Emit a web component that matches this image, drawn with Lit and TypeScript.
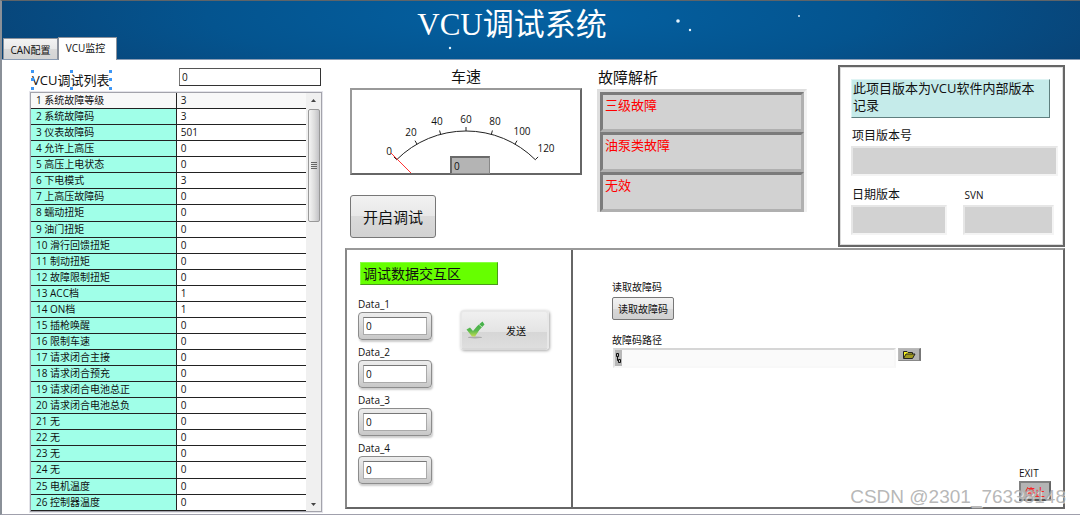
import { LitElement, html, svg, css } from "lit";
import { customElement } from "lit/decorators.js";

const SIGNALS: [string, string][] = [
  ["系统故障等级", "3"],
  ["系统故障码", "3"],
  ["仪表故障码", "501"],
  ["允许上高压", "0"],
  ["高压上电状态", "0"],
  ["下电模式", "3"],
  ["上高压故障码", "0"],
  ["蠕动扭矩", "0"],
  ["油门扭矩", "0"],
  ["滑行回馈扭矩", "0"],
  ["制动扭矩", "0"],
  ["故障限制扭矩", "0"],
  ["ACC档", "1"],
  ["ON档", "1"],
  ["插枪唤醒", "0"],
  ["限制车速", "0"],
  ["请求闭合主接", "0"],
  ["请求闭合预充", "0"],
  ["请求闭合电池总正", "0"],
  ["请求闭合电池总负", "0"],
  ["无", "0"],
  ["无", "0"],
  ["无", "0"],
  ["无", "0"],
  ["电机温度", "0"],
  ["控制器温度", "0"],
];

const FAULTS = ["三级故障", "油泵类故障", "无效"];

const base = css`
  * {
    box-sizing: border-box;
  }
  button,
  input {
    font: inherit;
    color: inherit;
    margin: 0;
    border-radius: 0;
  }
  input {
    min-width: 0;
    outline: none;
  }
  label {
    display: block;
  }
`;

@customElement("signal-list")
export class SignalList extends LitElement {
  static styles = [
    base,
    css`
      :host {
        display: flex;
        flex-direction: column;
      }
      .head {
        display: flex;
        align-items: flex-start;
        justify-content: space-between;
        padding: 3px 1px 3px 1px;
      }
      .title {
        position: relative;
        margin-top: 3px;
        font-size: 13px;
        line-height: 18px;
        padding: 0 1px;
      }
      .handle {
        position: absolute;
        width: 3px;
        height: 3px;
        background: #3c96f5;
      }
      .t { top: -1px; }
      .m { top: 7px; }
      .b { bottom: -1px; }
      .l { left: 0; }
      .c { left: calc(50% - 1px); }
      .r { right: -2px; }
      .index {
        width: 49%;
        height: 18px;
        border: 1px solid #333;
        border-left-color: #777;
        border-top-color: #555;
        background: #fff;
        padding: 0 2px;
      }
      .frame {
        flex: 1;
        display: grid;
        grid-template-columns: 1fr 15px;
        border: 1px solid #a3a3ab;
        outline: 1px solid #e4e4ea;
      }
      table {
        width: 100%;
        height: 100%;
        border-collapse: separate;
        border-spacing: 0;
        table-layout: fixed;
      }
      td,
      th {
        height: 16px;
        padding: 0 4px;
        font-weight: 400;
        text-align: left;
        line-height: 15px;
        white-space: nowrap;
        border-bottom: 1px solid #222;
      }
      th {
        width: 53%;
        padding-left: 5px;
        background: #a0ffe8;
        border-right: 1px solid #222;
      }
      tr:first-child > * {
        background: #f8f8f8;
      }
      .bar {
        display: flex;
        flex-direction: column;
        align-items: center;
        background: #f0f0f0;
      }
      .arrow {
        display: block;
        width: 13px;
        height: 16px;
      }
      .thumb {
        display: grid;
        place-items: center;
        width: 12px;
        height: 27%;
        margin-bottom: auto;
        border: 1px solid #999;
        border-radius: 2px;
        background: linear-gradient(90deg, #f4f4f4, #dcdcdc 55%, #c2c2c6);
      }
    `,
  ];

  render() {
    return html`
      <div class="head">
        <label class="title" for="index">
          VCU调试列表
          ${["t l", "t c", "t r", "m l", "m r", "b l", "b c", "b r"].map(
            (p) => html`<span class="handle ${p}"></span>`
          )}
        </label>
        <input class="index" id="index" value="0" />
      </div>
      <div class="frame">
        <table>
          <tbody>
            ${SIGNALS.map(
              ([name, value], i) =>
                html`<tr><th scope="row">${i + 1} ${name}</th><td>${value}</td></tr>`
            )}
          </tbody>
        </table>
        <div class="bar">
          <svg class="arrow" viewBox="0 0 13 16"><path d="M4 9 L6.5 6 L9 9Z" fill="#444" /></svg>
          <div class="thumb">
            <svg width="6" height="7" viewBox="0 0 6 7">
              <path d="M0 .5H6M0 2.5H6M0 4.5H6M0 6.5H6" stroke="#666" />
            </svg>
          </div>
          <svg class="arrow" viewBox="0 0 13 16"><path d="M4 8 L6.5 11 L9 8Z" fill="#444" /></svg>
        </div>
      </div>
    `;
  }
}

@customElement("speed-gauge")
export class SpeedGauge extends LitElement {
  static styles = [
    base,
    css`
      :host {
        display: block;
      }
      .title {
        margin-bottom: 2px;
        text-align: center;
        font-size: 15px;
        line-height: 20px;
      }
      .dial {
        position: relative;
        border: 2px solid #666;
        border-top-color: #999;
        border-left-color: #999;
        background: #fff;
      }
      svg {
        display: block;
        width: 100%;
      }
      text {
        font-size: 10px;
        text-anchor: middle;
        fill: #111;
      }
      .value {
        position: absolute;
        left: 43%;
        bottom: -1px;
        width: 40px;
        height: 18px;
        padding: 0 2px;
        background: #b4b4b4;
        border: 1px solid #888;
        border-top: 2px solid #6a6a6a;
        border-left: 2px solid #6a6a6a;
      }
    `,
  ];

  render() {
    const cx = 114;
    const cy = 139;
    const r = 98;
    const at = (deg: number, radius: number): [number, number] => [
      cx + radius * Math.sin((deg * Math.PI) / 180),
      cy - radius * Math.cos((deg * Math.PI) / 180),
    ];
    const labels: [number, number][] = [
      [37, 65], [59, 46], [85, 35], [114, 33], [143, 35], [170, 45], [194, 62],
    ];
    return html`
      <label class="title" for="speed">车速</label>
      <div class="dial">
        <svg viewBox="0 0 228 83">
          <path d="M44.7 69.7 A98 98 0 0 1 183.3 69.7" fill="none" stroke="#222" />
          ${labels.map(([x, y], i) => {
            const [x1, y1] = at(-45 + i * 15, r);
            const [x2, y2] = at(-45 + i * 15, r + 4);
            return svg`
              <path d="M${x1} ${y1} L${x2} ${y2}" stroke="#222" />
              <text x=${x} y=${y}>${i * 20}</text>`;
          })}
          <path d="M39 63 L59 83" stroke="#f33" />
        </svg>
        <input class="value" id="speed" value="0" readonly />
      </div>
    `;
  }
}

@customElement("fault-view")
export class FaultView extends LitElement {
  static styles = [
    base,
    css`
      :host {
        display: block;
      }
      .title {
        margin-bottom: 2px;
        padding-left: 1px;
        font-size: 15px;
        line-height: 20px;
      }
      .box {
        border: 3px solid #dedede;
        border-right-color: #f2f2f2;
        border-bottom: 0;
      }
      .row {
        height: 40px;
        padding: 0 2px;
        font-size: 13px;
        line-height: 20px;
        color: #f00;
        background: #d2d2d2;
        border: 3px solid;
        border-color: #7b7b7b #b0b0b0 #b0b0b0 #7b7b7b;
      }
    `,
  ];

  render() {
    return html`
      <div class="title">故障解析</div>
      <div class="box">${FAULTS.map((f) => html`<div class="row">${f}</div>`)}</div>
    `;
  }
}

@customElement("version-panel")
export class VersionPanel extends LitElement {
  static styles = [
    base,
    css`
      :host {
        display: block;
        box-sizing: border-box;
        padding: 12px 5px 10px 11px;
        border: 2px solid #666;
        outline: 1px solid #ddd;
        outline-offset: -3px;
      }
      .note {
        margin-right: 8px;
        padding: 0 2px 3px 1px;
        font-size: 13px;
        line-height: 17px;
        background: #c5ebea;
        border: 1px solid #5f7f7f;
        border-top-color: #dff4f4;
        border-left-color: #dff4f4;
      }
      label {
        padding-left: 1px;
        font-size: 12px;
        line-height: 18px;
        height: 19px;
      }
      .small {
        font-size: 10px;
      }
      .wide {
        margin: 9px 0 10px;
      }
      .pair {
        display: grid;
        grid-template-columns: 97fr 91fr;
        gap: 16px;
        padding-right: 4px;
      }
      input {
        display: block;
        width: 100%;
        height: 30px;
        background: #d2d2d2;
        border: 2px solid;
        border-color: #e6e6e6 #f4f4f4 #f4f4f4 #e6e6e6;
      }
    `,
  ];

  render() {
    return html`
      <div class="note">此项目版本为VCU软件内部版本记录</div>
      <div class="wide">
        <label for="project">项目版本号</label>
        <input id="project" readonly />
      </div>
      <div class="pair">
        <div>
          <label for="date">日期版本</label>
          <input id="date" readonly />
        </div>
        <div>
          <label class="small" for="svn">SVN</label>
          <input id="svn" readonly />
        </div>
      </div>
    `;
  }
}

@customElement("exchange-panel")
export class ExchangePanel extends LitElement {
  static styles = [
    base,
    css`
      :host {
        display: block;
        padding: 12px 22px 0 11px;
      }
      .title {
        width: 138px;
        margin-left: 2px;
        padding: 0 2px;
        font-size: 14px;
        line-height: 21px;
        background: #6f0;
        border: 1px solid #4a9a1a;
        border-top-color: #8f4;
        border-left-color: #8f4;
      }
      .body {
        display: flex;
        justify-content: space-between;
        align-items: flex-start;
        padding-top: 11px;
      }
      .fields {
        display: grid;
        gap: 4px;
      }
      label {
        line-height: 16px;
      }
      .well {
        width: 74px;
        padding: 4px;
        border: 1px solid #8c8c8c;
        border-radius: 4px;
        background: linear-gradient(#ededed, #c8c8c8);
        box-shadow: 1px 2px 2px #ccc;
      }
      .well input {
        display: block;
        width: 100%;
        height: 18px;
        padding: 0 2px;
        background: #fff;
        border: 1px solid #aaa;
        border-top-color: #777;
      }
      .send {
        display: flex;
        align-items: center;
        width: 89px;
        height: 40px;
        margin-top: 14px;
        padding: 0 21px 0 4px;
        justify-content: space-between;
        border: 2px solid #e8e8e8;
        border-bottom-color: #d8d8d8;
        border-radius: 4px;
        background: linear-gradient(#f0f0f0, #e4e4e4 55%, #d6d6d6 56%, #dedede);
        box-shadow: 1px 1px 3px #aaa;
      }
    `,
  ];

  render() {
    return html`
      <div class="title">调试数据交互区</div>
      <div class="body">
        <div class="fields">
          ${[1, 2, 3, 4].map(
            (n) => html`<div>
              <label for="d${n}">Data_${n}</label>
              <div class="well"><input id="d${n}" value="0" /></div>
            </div>`
          )}
        </div>
        <button class="send">
          <svg width="19" height="18" viewBox="0 0 19 18">
            <defs>
              <linearGradient id="leaf" x1="0" y1="0" x2="0" y2="1">
                <stop offset="0" stop-color="#3fae49" />
                <stop offset=".6" stop-color="#58b84e" />
                <stop offset="1" stop-color="#c0dc50" />
              </linearGradient>
            </defs>
            <ellipse cx="9" cy="16.4" rx="7" ry="1" fill="#aaa" />
            <path d="M.5 8.500 L4 6.500 L7 10 Q11 4.500 16.500 .5 L18.500 3.500 Q12.500 9 9 15.500 L6 15.500 Z" fill="url(#leaf)" />
            <path d="M13 3.500 L16 6" stroke="#d9f0d0" stroke-width=".8" />
          </svg>
          <span>发送</span>
        </button>
      </div>
    `;
  }
}

@customElement("code-panel")
export class CodePanel extends LitElement {
  static styles = [
    base,
    css`
      :host {
        display: flex;
        flex-direction: column;
        padding: 29px 12px 6px 39px;
      }
      .lab {
        line-height: 16px;
      }
      .read {
        align-self: flex-start;
        width: 62px;
        height: 23px;
        margin: 2px 0 12px;
        padding: 0;
        border: 1px solid #777;
        border-radius: 2px;
        background: linear-gradient(#f2f2f2, #e6e6e6 50%, #d8d8d8 51%, #d0d0d0);
      }
      .path {
        display: flex;
        align-items: flex-start;
        gap: 2px;
        padding: 0 130px 0 1px;
      }
      .field {
        flex: 1;
        display: flex;
        height: 20px;
        border: 2px solid;
        border-color: #d6d6d6 #f6f6f6 #f8f8f8 #e2e2e2;
        background: #fafafa;
      }
      .field svg {
        flex: none;
        background: #b8b8b8;
      }
      .field input {
        flex: 1;
        border: 0;
        padding: 0 2px;
        background: none;
      }
      .browse {
        display: grid;
        place-items: center;
        width: 23px;
        height: 13px;
        padding: 0;
        border: 1px solid #bbb;
        border-right: 2px solid #777;
        border-bottom-color: #888;
        background: #b4b4b4;
      }
      .exit {
        align-self: flex-end;
        margin-top: auto;
      }
      .stop {
        display: block;
        width: 32px;
        height: 20px;
        padding: 0;
        color: #f00;
        background: #b4b4b4;
        border: 2px solid;
        border-color: #808080 #666 #555 #808080;
      }
    `,
  ];

  render() {
    return html`
      <label class="lab" for="read">读取故障码</label>
      <button class="read" id="read">读取故障码</button>
      <label class="lab" for="path">故障码路径</label>
      <div class="path">
        <div class="field">
          <svg width="7" height="16" viewBox="0 0 7 16">
            <path d="M1.500 3.500h2v3h-2zM2.500 7v3.500h1M3.500 9.500h2v3h-2z" fill="none" stroke="#111" />
          </svg>
          <input id="path" />
        </div>
        <button class="browse" aria-label="浏览">
          <svg width="14" height="9" viewBox="0 0 14 9">
            <path d="M1.500 8V1.500H5L6 2.500H10.500V4" fill="#f4ee20" stroke="#222" />
            <path d="M1.500 8.500L4 4H13L10.500 8.500Z" fill="#a09a20" stroke="#222" />
          </svg>
        </button>
      </div>
      <div class="exit">
        <label class="lab" for="stop">EXIT</label>
        <button class="stop" id="stop">停止</button>
      </div>
    `;
  }
}

@customElement("app-root")
export class AppRoot extends LitElement {
  static styles = [
    base,
    css`
      :host {
        display: flex;
        flex-direction: column;
        position: relative;
        box-sizing: border-box;
        min-height: 100vh;
        padding-bottom: 1px;
        font-family: "Open Sans", "Noto Sans CJK SC", sans-serif;
        font-size: 10px;
        color: #111;
        background: #fff;
      }
      header {
        position: relative;
        height: 60px;
        border-top: 1px solid #5f6468;
        border-left: 2px solid #8a9098;
        border-bottom: 1px solid #8a9cb4;
        background: radial-gradient(ellipse 62% 190% at 50% 25%, #0461a2, #04548f 50%, #0a3f70);
      }
      h1 {
        margin: 0;
        padding: 2px 58px 0 0;
        text-align: center;
        font: 400 31px/44px "Liberation Serif", "Noto Sans CJK SC", serif;
        color: #fff;
      }
      .stars {
        position: absolute;
        inset: 0;
        width: 100%;
        height: 100%;
      }
      nav {
        position: absolute;
        left: 1px;
        bottom: -1px;
        display: flex;
        align-items: flex-end;
      }
      .tab {
        height: 21px;
        width: 55px;
        padding: 0;
        margin-bottom: 1px;
        border: 1px solid #8c929c;
        border-bottom: 0;
        background: linear-gradient(#f3f3f3, #e9e9e9 50%, #dadada 51%, #d4d4d4);
      }
      .on {
        height: 23px;
        width: 59px;
        margin: 0;
        padding: 0 4px 3px 0;
        background: #fff;
      }
      main {
        flex: 1;
        display: flex;
        gap: 23px;
        padding: 5px 15px 2px 28px;
        border-left: 2px solid #8a9098;
        border-bottom: 1px solid #a0a0ac;
      }
      signal-list {
        flex: 292 1 0;
        min-width: 0;
      }
      .right {
        flex: 720 1 0;
        min-width: 0;
        display: flex;
        flex-direction: column;
        padding-bottom: 3px;
      }
      .top {
        display: grid;
        grid-template-columns: 247fr 241fr 227fr;
        align-items: start;
        padding: 0 0 1px 5px;
      }
      .left {
        padding: 1px 15px 0 0;
      }
      .start {
        width: 86px;
        height: 43px;
        margin-top: 20px;
        padding: 0;
        font-size: 15px;
        border: 1px solid #777;
        border-radius: 3px;
        background: linear-gradient(#f2f2f2, #e8e8e8 48%, #dadada 50%, #d2d2d2);
      }
      fault-view {
        padding-top: 2px;
        margin-right: 31px;
      }
      .bottom {
        flex: 1;
        display: grid;
        grid-template-columns: 224fr 492fr;
        border: 2px solid #666;
        border-top-color: #999;
        border-left-color: #888;
      }
      code-panel {
        border-left: 2px solid #666;
      }
      .mark {
        position: absolute;
        right: 14px;
        bottom: 9px;
        font: 19px/20px "Liberation Sans", sans-serif;
        color: rgba(165, 165, 165, 0.8);
        text-shadow: 1px 1px 0 rgba(255, 255, 255, 0.6);
        pointer-events: none;
      }
    `,
  ];

  render() {
    return html`
      <header>
        <svg class="stars" viewBox="0 0 1078 58" preserveAspectRatio="none">
          <g fill="#e4f4ff">
            <circle cx="676" cy="20" r="1.800" />
            <circle cx="688" cy="29" r="1.200" />
            <circle cx="448" cy="47" r="1.200" />
            <circle cx="797" cy="15" r=".9" />
          </g>
        </svg>
        <h1>VCU调试系统</h1>
        <nav>
          <button class="tab">CAN配置</button>
          <button class="tab on">VCU监控</button>
        </nav>
      </header>
      <main>
        <signal-list></signal-list>
        <div class="right">
          <div class="top">
            <div class="left">
              <speed-gauge></speed-gauge>
              <button class="start">开启调试</button>
            </div>
            <fault-view></fault-view>
            <version-panel></version-panel>
          </div>
          <div class="bottom">
            <exchange-panel></exchange-panel>
            <code-panel></code-panel>
          </div>
        </div>
      </main>
      <div class="mark">CSDN @2301_76338148</div>
    `;
  }
}
